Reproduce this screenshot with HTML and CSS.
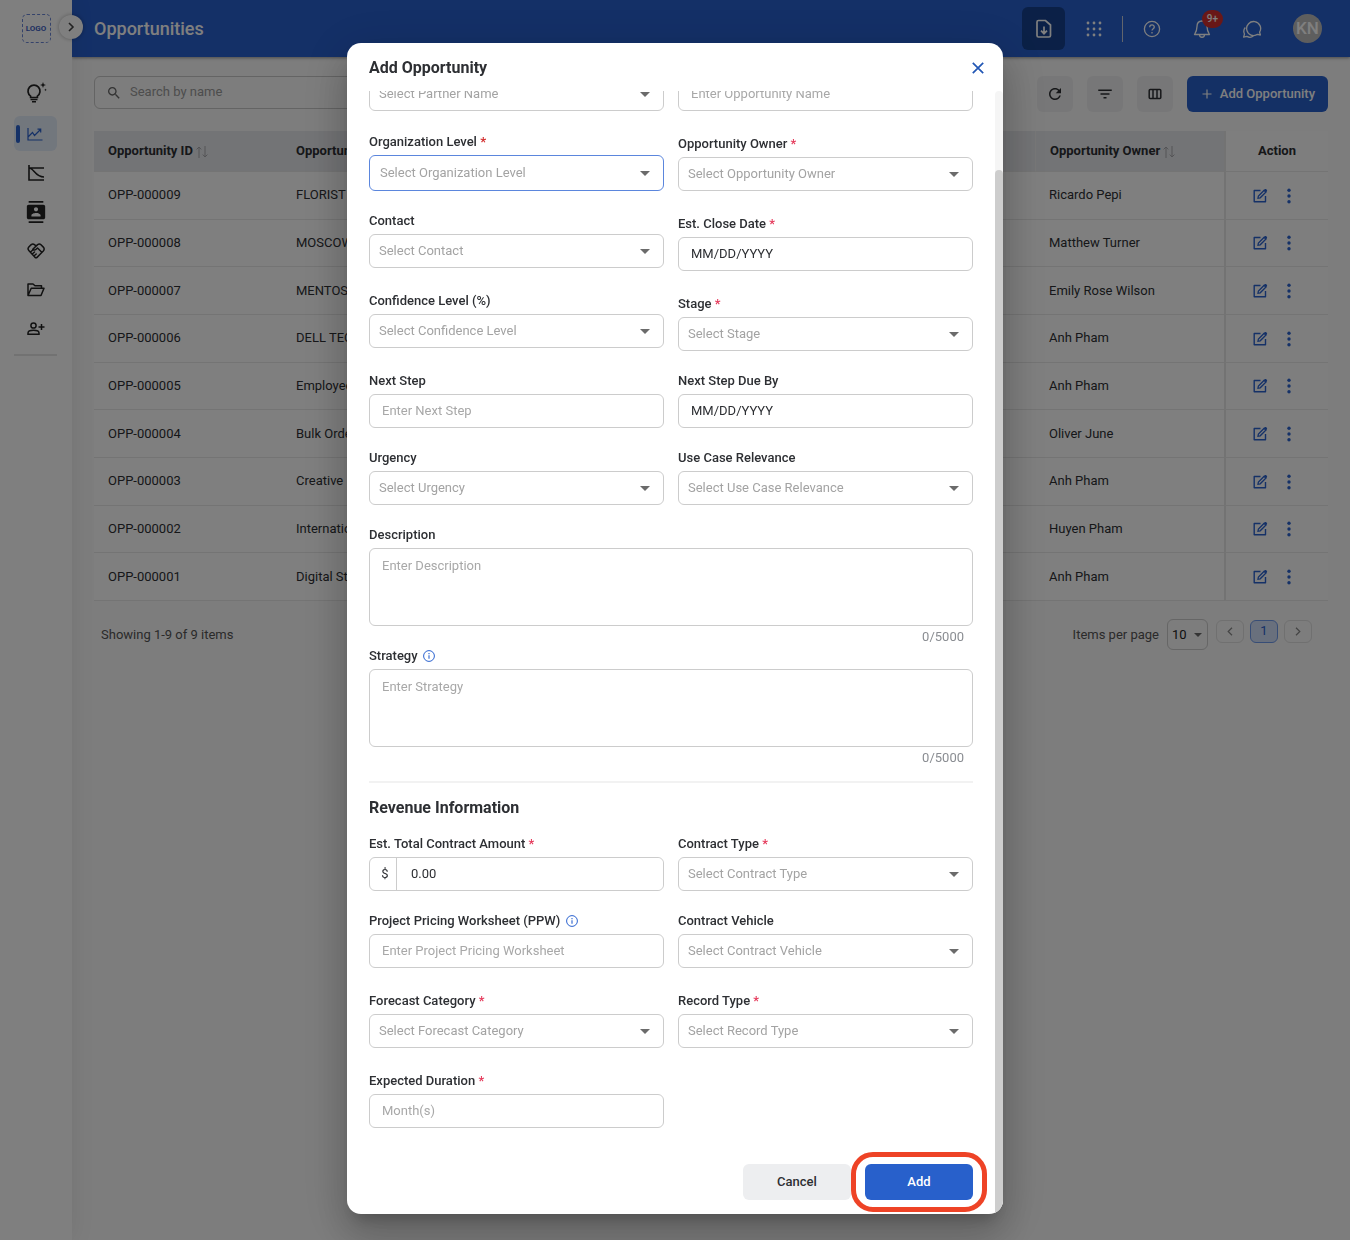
FILE: index.html
```
<!DOCTYPE html>
<html lang="en">
<head>
    <meta charset="UTF-8">
    <meta name="viewport" content="width=device-width, initial-scale=1.0">
    <title>Opportunities</title>
    <link rel="stylesheet" href="styles.css">
</head>
<body>

<svg class="sprite" aria-hidden="true">
    <symbol id="i-edit" viewBox="0 0 16 16"><path d="M8.5 2.5H2.2v11.3h11.3V8" fill="none" stroke="currentColor" stroke-width="1.4" stroke-linejoin="round"/><path d="M6 10.2l.4-2.2 5.8-5.8 1.8 1.8-5.8 5.8z" fill="none" stroke="currentColor" stroke-width="1.3"/><path d="M11.6 2.6l1.3-1.3c.5-.5 1-.4 1.4 0l.6.6c.4.4.4.9 0 1.4l-1.3 1.3z" fill="currentColor"/></symbol>
    <symbol id="i-dots" viewBox="0 0 4 16"><circle cx="2" cy="2.2" r="1.7" fill="currentColor"/><circle cx="2" cy="8" r="1.7" fill="currentColor"/><circle cx="2" cy="13.8" r="1.7" fill="currentColor"/></symbol>
    <symbol id="i-sort" viewBox="0 0 12 12"><path d="M3 12V1M.6 3.4L3 1l2.2 2.4M9 0v11M6.8 8.6L9 11l2.4-2.4" fill="none" stroke="currentColor"/></symbol>
    <symbol id="i-info" viewBox="0 0 12 12"><circle cx="6" cy="6" r="5.4" fill="none" stroke="currentColor"/><path d="M6 5.2v3.6M6 3v1.2" stroke="currentColor" stroke-width="1.1"/></symbol>
</svg>

<div class="app">
    <nav class="sidebar">
        <div class="logo">LOGO</div>
        <button class="sidebar-toggle" aria-label="Expand menu">
            <svg width="8" height="10" viewBox="0 0 8 10"><path d="M2 1l4 4-4 4" fill="none" stroke="currentColor" stroke-width="1.6"/></svg>
        </button>
        <div class="menu">
            <a class="menu-item menu-item-first" href="#" aria-label="Insights">
                <svg width="22" height="22" viewBox="0 0 22 22" fill="none" stroke="currentColor"><path d="M5.600 14.100a6 6 0 1 1 6.800 0v1.400H5.600z" stroke-width="1.7"/><path d="M5.500 17.500h7M7 19.700h4" stroke-width="1.600"/><path d="M18 0l.8 2.200L21 3l-2.200.8L18 6l-.8-2.200L15 3l2.200-.8zM20.500 6.500l.4 1 1 .4-1 .4-.4 1-.4-1-1-.4 1-.4z" fill="currentColor" stroke="none"/></svg>
            </a>
            <a class="menu-item active" href="#" aria-label="Opportunities">
                <svg width="16" height="14" viewBox="0 0 16 14" fill="none" stroke="currentColor"><path d="M1 1v12h14.500M1 10l4.500-4.500 2 3 6-6M10.500 2.200h3.200v3.200" stroke-width="1.200"/></svg>
            </a>
            <a class="menu-item" href="#" aria-label="Forecast">
                <svg width="16" height="16" viewBox="0 0 16 16" fill="none" stroke="currentColor"><path d="M1 0v15h15M1 3h15M1 3c5 0 6 9 15 9" stroke-width="1.600"/></svg>
            </a>
            <a class="menu-item" href="#" aria-label="Contacts">
                <svg width="22" height="22" viewBox="0 0 24 24" fill="currentColor"><path d="M20 0H4v2h16V0zM4 24h16v-2H4v2zM20 4H4c-1.100 0-2 .9-2 2v12c0 1.100.9 2 2 2h16c1.100 0 2-.9 2-2V6c0-1.100-.9-2-2-2zm-8 2.750c1.240 0 2.250 1.010 2.250 2.250s-1.010 2.250-2.250 2.250S9.750 10.240 9.750 9 10.760 6.750 12 6.750zM17 17H7v-1.500c0-1.670 3.330-2.500 5-2.500s5 .83 5 2.500V17z"/></svg>
            </a>
            <a class="menu-item" href="#" aria-label="Partners">
                <svg width="18" height="16" viewBox="0 0 18 16" fill="none" stroke="currentColor" stroke-width="1.500" stroke-linecap="round" stroke-linejoin="round"><path d="M9 3L7.500 1.600C6.500.8 5.200.8 4.200 1.600L1.800 4c-1 1.200-1 2.400 0 3.500l6 6.600c.8.8 1.700.8 2.500 0l6-6.200c1.100-1.200 1.100-2.600 0-3.800L14 1.800c-1-1-2.300-1-3.400-.2L5.800 6.300c.9 1.100 2.100 1 3 .2L10.500 5l4.300 4.200M3.500 9l2-1.800M5.300 11l2.200-2M7.200 12.800l2-1.800"/></svg>
            </a>
            <a class="menu-item" href="#" aria-label="Documents">
                <svg width="18" height="14" viewBox="0 0 18 14" fill="none" stroke="currentColor" stroke-width="1.500" stroke-linejoin="round"><path d="M1 12.500V1h5l2 1.800h6.500v2.400M1 12.500L4.200 5.200H17l-3 7.300z"/></svg>
            </a>
            <a class="menu-item" href="#" aria-label="Add user">
                <svg width="18" height="14" viewBox="0 0 18 14" fill="none" stroke="currentColor" stroke-width="1.500"><circle cx="6.500" cy="3.500" r="2.600"/><path d="M1 12.200v-1.300c0-3.600 11-3.600 11 0v1.300zM14.500 2v6M11.500 5h6"/></svg>
            </a>
        </div>
    </nav>

    <div class="main">
        <header class="topbar">
            <h1>Opportunities</h1>
            <div class="topbar-actions">
                <button class="topbar-btn topbar-btn-dark" aria-label="Download">
                    <svg width="16" height="20" viewBox="0 0 16 20" fill="none" stroke="currentColor" stroke-width="1.700"><path d="M2.500 1.500h7L14.500 6v10.500a1.500 1.500 0 0 1-1.500 1.500H2.500A1.500 1.500 0 0 1 1 16.500V3a1.500 1.500 0 0 1 1.500-1.500zM8 7.500v7M5 11.700l3 3 3-3"/></svg>
                </button>
                <button class="topbar-btn" aria-label="Apps">
                    <svg width="16" height="16" viewBox="0 0 16 16" fill="currentColor"><circle cx="2" cy="2" r="1.400"/><circle cx="8" cy="2" r="1.400"/><circle cx="14" cy="2" r="1.400"/><circle cx="2" cy="8" r="1.400"/><circle cx="8" cy="8" r="1.400"/><circle cx="14" cy="8" r="1.400"/><circle cx="2" cy="14" r="1.400"/><circle cx="8" cy="14" r="1.400"/><circle cx="14" cy="14" r="1.400"/></svg>
                </button>
                <span class="topbar-line"></span>
                <button class="topbar-btn" aria-label="Help">
                    <svg width="18" height="18" viewBox="0 0 18 18" fill="none" stroke="currentColor" stroke-width="1.300"><circle cx="9" cy="9" r="7.600"/><path d="M6.700 7.200c0-3 4.600-3 4.600-.2 0 1.700-2.300 1.800-2.300 3.600M9 12v1.500"/></svg>
                </button>
                <button class="topbar-btn" aria-label="Notifications">
                    <svg width="18" height="20" viewBox="0 0 18 20" fill="none" stroke="currentColor" stroke-width="1.300" stroke-linejoin="round"><path d="M9 2C5.500 2 4 4.500 4 7.500c0 4-1 5.500-2.500 8h15C15 13 14 11.500 14 7.500 14 4.500 12.500 2 9 2zM6.500 16c.3 3 4.700 3 5 0"/></svg>
                    <span class="badge">9+</span>
                </button>
                <button class="topbar-btn" aria-label="Messages">
                    <svg width="20" height="20" viewBox="0 0 20 20" fill="none" stroke="currentColor" stroke-width="1.300" stroke-linejoin="round"><path d="M17.600 13.200l.8 2.800-2.800-.7a7 7 0 1 1 2-2.100zM3.300 8.500a6 6 0 0 0-.8 6.500l-.9 3.200 3.300-.8c2.300 1.300 4.800 1 6.600-.6"/></svg>
                </button>
                <span class="avatar">KN</span>
            </div>
        </header>

        <main class="content">
            <div class="toolbar">
                <label class="search">
                    <svg width="16" height="16" viewBox="0 0 24 24" fill="currentColor"><path d="M15.500 14h-.79l-.28-.27C15.410 12.590 16 11.110 16 9.500 16 5.910 13.090 3 9.500 3S3 5.910 3 9.500 5.910 16 9.500 16c1.610 0 3.090-.59 4.230-1.570l.27.28v.79l5 4.990L20.490 19l-4.990-5zm-6 0C7.010 14 5 11.990 5 9.500S7.010 5 9.500 5 14 7.010 14 9.500 11.990 14 9.500 14z"/></svg>
                    <input type="text" placeholder="Search by name" aria-label="Search by name">
                </label>
                <div class="tools">
                    <button class="tool" aria-label="Refresh"><svg width="18" height="18" viewBox="0 0 24 24" fill="currentColor"><path d="M17.650 6.350C16.200 4.900 14.210 4 12 4c-4.420 0-7.990 3.580-7.990 8s3.570 8 7.990 8c3.730 0 6.840-2.550 7.730-6h-2.080c-.82 2.330-3.040 4-5.650 4-3.310 0-6-2.690-6-6s2.690-6 6-6c1.660 0 3.140.69 4.220 1.780L13 11h7V4l-2.350 2.350z"/></svg></button>
                    <button class="tool" aria-label="Filter"><svg width="18" height="18" viewBox="0 0 24 24" fill="currentColor"><path d="M10 18h4v-2h-4v2zM3 6v2h18V6H3zm3 7h12v-2H6v2z"/></svg></button>
                    <button class="tool" aria-label="Columns"><svg width="14" height="12" viewBox="0 0 14 12" fill="none" stroke="currentColor" stroke-width="1.500"><rect x="1.200" y="1.500" width="11.600" height="9" rx="1"/><path d="M5 1.500v9M9 1.500v9"/></svg></button>
                    <button class="btn btn-primary btn-new">
                        <svg width="10" height="10" viewBox="0 0 10 10"><path d="M5 .5v9M.5 5h9" stroke="currentColor" stroke-width="1.200"/></svg>
                        Add Opportunity
                    </button>
                </div>
            </div>

            <table class="grid">
                <thead>
                    <tr>
                        <th class="col-id">Opportunity ID <svg class="sort"><use href="#i-sort"/></svg></th>
                        <th class="col-name">Opportunity Name <svg class="sort"><use href="#i-sort"/></svg></th>
                        <th class="col-owner">Opportunity Owner <svg class="sort"><use href="#i-sort"/></svg></th>
                        <th class="col-action">Action</th>
                    </tr>
                </thead>
                <tbody>
                    <tr><td>OPP-000009</td><td>FLORIST</td><td>Ricardo Pepi</td><td class="col-action"><button aria-label="Edit"><svg class="edit"><use href="#i-edit"/></svg></button><button aria-label="More"><svg class="dots"><use href="#i-dots"/></svg></button></td></tr>
                    <tr><td>OPP-000008</td><td>MOSCOW</td><td>Matthew Turner</td><td class="col-action"><button aria-label="Edit"><svg class="edit"><use href="#i-edit"/></svg></button><button aria-label="More"><svg class="dots"><use href="#i-dots"/></svg></button></td></tr>
                    <tr><td>OPP-000007</td><td>MENTOS</td><td>Emily Rose Wilson</td><td class="col-action"><button aria-label="Edit"><svg class="edit"><use href="#i-edit"/></svg></button><button aria-label="More"><svg class="dots"><use href="#i-dots"/></svg></button></td></tr>
                    <tr><td>OPP-000006</td><td>DELL TECH</td><td>Anh Pham</td><td class="col-action"><button aria-label="Edit"><svg class="edit"><use href="#i-edit"/></svg></button><button aria-label="More"><svg class="dots"><use href="#i-dots"/></svg></button></td></tr>
                    <tr><td>OPP-000005</td><td>Employee</td><td>Anh Pham</td><td class="col-action"><button aria-label="Edit"><svg class="edit"><use href="#i-edit"/></svg></button><button aria-label="More"><svg class="dots"><use href="#i-dots"/></svg></button></td></tr>
                    <tr><td>OPP-000004</td><td>Bulk Order</td><td>Oliver June</td><td class="col-action"><button aria-label="Edit"><svg class="edit"><use href="#i-edit"/></svg></button><button aria-label="More"><svg class="dots"><use href="#i-dots"/></svg></button></td></tr>
                    <tr><td>OPP-000003</td><td>Creative I</td><td>Anh Pham</td><td class="col-action"><button aria-label="Edit"><svg class="edit"><use href="#i-edit"/></svg></button><button aria-label="More"><svg class="dots"><use href="#i-dots"/></svg></button></td></tr>
                    <tr><td>OPP-000002</td><td>International</td><td>Huyen Pham</td><td class="col-action"><button aria-label="Edit"><svg class="edit"><use href="#i-edit"/></svg></button><button aria-label="More"><svg class="dots"><use href="#i-dots"/></svg></button></td></tr>
                    <tr><td>OPP-000001</td><td>Digital Strategy</td><td>Anh Pham</td><td class="col-action"><button aria-label="Edit"><svg class="edit"><use href="#i-edit"/></svg></button><button aria-label="More"><svg class="dots"><use href="#i-dots"/></svg></button></td></tr>
                </tbody>
            </table>

            <div class="pager">
                <span class="pager-count">Showing 1-9 of 9 items</span>
                <div class="pager-nav">
                    <label for="per-page">Items per page</label>
                    <div class="select select-small">
                        <select id="per-page"><option>10</option></select>
                    </div>
                    <div class="pages">
                        <button aria-label="Previous page"><svg width="6" height="9" viewBox="0 0 6 9"><path d="M5 .8L1.200 4.500 5 8.200" fill="none" stroke="currentColor" stroke-width="1.200"/></svg></button>
                        <button class="current">1</button>
                        <button aria-label="Next page"><svg width="6" height="9" viewBox="0 0 6 9"><path d="M1 .8l3.800 3.700L1 8.200" fill="none" stroke="currentColor" stroke-width="1.200"/></svg></button>
                    </div>
                </div>
            </div>
        </main>
    </div>
</div>

<div class="overlay">
    <div class="modal" role="dialog" aria-labelledby="modal-title">
        <div class="modal-header">
            <h2 id="modal-title">Add Opportunity</h2>
            <button class="close" aria-label="Close">
                <svg width="12" height="12" viewBox="0 0 12 12"><path d="M.8.8l10.400 10.400M11.200.8L.8 11.200" stroke="currentColor" stroke-width="1.700"/></svg>
            </button>
        </div>
        <div class="modal-scroll">
            <form class="modal-body" id="modal-body">
                <div class="fields">
                    <div class="field">
                        <div class="select"><select aria-label="Partner Name"><option>Select Partner Name</option></select></div>
                    </div>
                    <div class="field">
                        <input type="text" aria-label="Opportunity Name" placeholder="Enter Opportunity Name">
                    </div>
                    <div class="field field-focus">
                        <label for="org">Organization Level <span>*</span></label>
                        <div class="select"><select id="org"><option>Select Organization Level</option></select></div>
                    </div>
                    <div class="field">
                        <label class="required" for="owner">Opportunity Owner <span>*</span></label>
                        <div class="select"><select id="owner"><option>Select Opportunity Owner</option></select></div>
                    </div>
                    <div class="field">
                        <label for="contact">Contact</label>
                        <div class="select"><select id="contact"><option>Select Contact</option></select></div>
                    </div>
                    <div class="field">
                        <label class="required" for="close-date">Est. Close Date <span>*</span></label>
                        <input type="text" id="close-date" value="MM/DD/YYYY">
                    </div>
                    <div class="field">
                        <label for="confidence">Confidence Level (%)</label>
                        <div class="select"><select id="confidence"><option>Select Confidence Level</option></select></div>
                    </div>
                    <div class="field">
                        <label class="required" for="stage">Stage <span>*</span></label>
                        <div class="select"><select id="stage"><option>Select Stage</option></select></div>
                    </div>
                    <div class="field">
                        <label for="next-step">Next Step</label>
                        <input type="text" id="next-step" placeholder="Enter Next Step">
                    </div>
                    <div class="field">
                        <label for="next-date">Next Step Due By</label>
                        <input type="text" id="next-date" value="MM/DD/YYYY">
                    </div>
                    <div class="field">
                        <label for="urgency">Urgency</label>
                        <div class="select"><select id="urgency"><option>Select Urgency</option></select></div>
                    </div>
                    <div class="field">
                        <label for="use-case">Use Case Relevance</label>
                        <div class="select"><select id="use-case"><option>Select Use Case Relevance</option></select></div>
                    </div>
                </div>

                <div class="field field-text">
                    <label for="description">Description</label>
                    <textarea id="description" placeholder="Enter Description"></textarea>
                    <span class="counter">0/5000</span>
                </div>
                <div class="field">
                    <label for="strategy">Strategy <svg class="info"><use href="#i-info"/></svg></label>
                    <textarea id="strategy" placeholder="Enter Strategy"></textarea>
                    <span class="counter">0/5000</span>
                </div>

                <h3>Revenue Information</h3>

                <div class="fields">
                    <div class="field">
                        <label class="required" for="amount">Est. Total Contract Amount <span>*</span></label>
                        <div class="money">
                            <span>$</span>
                            <input type="text" id="amount" value="0.00">
                        </div>
                    </div>
                    <div class="field">
                        <label class="required" for="contract-type">Contract Type <span>*</span></label>
                        <div class="select"><select id="contract-type"><option>Select Contract Type</option></select></div>
                    </div>
                    <div class="field">
                        <label for="ppw">Project Pricing Worksheet (PPW) <svg class="info"><use href="#i-info"/></svg></label>
                        <input type="text" id="ppw" placeholder="Enter Project Pricing Worksheet">
                    </div>
                    <div class="field">
                        <label for="vehicle">Contract Vehicle</label>
                        <div class="select"><select id="vehicle"><option>Select Contract Vehicle</option></select></div>
                    </div>
                    <div class="field">
                        <label class="required" for="forecast">Forecast Category <span>*</span></label>
                        <div class="select"><select id="forecast"><option>Select Forecast Category</option></select></div>
                    </div>
                    <div class="field">
                        <label class="required" for="record">Record Type <span>*</span></label>
                        <div class="select"><select id="record"><option>Select Record Type</option></select></div>
                    </div>
                    <div class="field">
                        <label class="required" for="duration">Expected Duration <span>*</span></label>
                        <input type="text" id="duration" placeholder="Month(s)">
                    </div>
                </div>

                <div class="modal-footer">
                    <button type="button" class="btn btn-secondary">Cancel</button>
                    <button type="button" class="btn btn-primary btn-marked">Add</button>
                </div>
            </form>
            <div class="scroll-track"><div class="scroll-thumb"></div></div>
        </div>
    </div>
</div>

<script>
    // open the form at its last section
    var body = document.getElementById("modal-body");
    body.scrollTop = body.scrollHeight;
</script>

</body>
</html>
```
FILE: styles.css
```
* {
    box-sizing: border-box;
}
body {
    margin: 0;
    font-family: Roboto, Arial, sans-serif;
    font-size: 13px;
    line-height: 16px;
    color: #2d2f33;
    background: #fafafa;
}
button, input, select, textarea {
    font: inherit;
    color: inherit;
}
button {
    display: flex;
    align-items: center;
    justify-content: center;
    padding: 0;
    border: 0;
    background: none;
    cursor: pointer;
}
h1, h2, h3 {
    margin: 0;
}
.sprite {
    display: none;
}
.app {
    display: flex;
    min-height: 100vh;
}

/* sidebar */
.sidebar {
    position: relative;
    flex: none;
    width: 72px;
    padding-top: 14px;
    background: #fff;
    box-shadow: 0 0 24px rgba(0, 0, 0, 0.08);
    z-index: 1;
}
.logo {
    width: 29px;
    height: 29px;
    margin: 0 auto;
    border: 1px dashed #6b86d6;
    border-radius: 5px;
    font-size: 8px;
    font-weight: 700;
    line-height: 28px;
    text-align: center;
    color: #3f62c4;
}
.sidebar-toggle {
    position: absolute;
    top: 15px;
    right: -11px;
    width: 24px;
    height: 24px;
    border-radius: 50%;
    background: #fff;
    color: #444;
    box-shadow: 0 0 4px rgba(0, 0, 0, 0.3);
}
.menu {
    display: flex;
    flex-direction: column;
    gap: 4px;
    margin: 30px 15px 0 14px;
    padding-bottom: 8px;
    border-bottom: 2px solid #e4e4e4;
}
.menu-item {
    display: flex;
    align-items: center;
    justify-content: center;
    height: 35px;
    border-radius: 6px;
    color: #222;
}
.menu-item-first {
    height: 39px;
}
.menu-item.active {
    background: #e4eefb;
    color: #2a62cf;
}
.menu-item.active::before {
    content: "";
    width: 4px;
    height: 18px;
    margin: 0 7px 0 -12px;
    border-radius: 2px;
    background: #2a62cf;
}

/* top bar */
.main {
    flex: 1;
    min-width: 0;
}
.topbar {
    display: flex;
    align-items: center;
    justify-content: space-between;
    height: 57px;
    padding: 0 28px 0 22px;
    background: #2860cf;
    color: #fff;
    box-shadow: 0 1px 3px rgba(0, 0, 0, 0.4);
}
.topbar h1 {
    font-size: 18px;
    font-weight: 500;
    line-height: 24px;
}
.topbar-actions {
    display: flex;
    align-items: center;
    gap: 7px;
}
.topbar-btn {
    position: relative;
    width: 43px;
    height: 43px;
    border-radius: 6px;
}
.topbar-btn-dark {
    background: #16418f;
}
.topbar-line {
    width: 1px;
    height: 26px;
    background: #c5cbd8;
}
.badge {
    position: absolute;
    top: 3px;
    right: 0;
    padding: 0 5px;
    border-radius: 9px;
    background: #d32f2f;
    font-size: 10px;
    font-weight: 500;
    line-height: 18px;
}
.avatar {
    width: 29px;
    height: 29px;
    margin-left: 13px;
    border-radius: 50%;
    background: #bdbdbd;
    font-size: 17px;
    font-weight: 500;
    line-height: 29px;
    text-align: center;
}

/* list page */
.content {
    padding: 19px 22px;
}
.toolbar {
    display: flex;
    justify-content: space-between;
    height: 36px;
}
.search {
    display: flex;
    align-items: center;
    gap: 8px;
    width: 420px;
    height: 33px;
    padding: 0 11px;
    border: 1px solid #c8c8c8;
    border-radius: 6px;
    color: #666;
}
.search input {
    flex: 1;
    padding: 0 0 1px;
    border: 0;
    background: none;
    outline: 0;
}
.search input::placeholder {
    color: #9a9a9a;
}
.tools {
    display: flex;
    gap: 14px;
}
.tool {
    width: 36px;
    border-radius: 6px;
    background: #efeff0;
    color: #2d2f33;
}
.btn {
    height: 36px;
    border-radius: 6px;
    font-weight: 500;
}
.btn-primary {
    background: #2860cb;
    color: #fff;
}
.btn-secondary {
    background: #edeef0;
}
.btn-new {
    gap: 8px;
    padding: 0 13px 0 15px;
}
.grid {
    width: 100%;
    height: 470px;
    margin-top: 19px;
    border-collapse: separate;
    border-spacing: 0;
    table-layout: fixed;
    background: #fff;
}
.grid th, .grid td {
    padding: 0 14px;
    border-bottom: 1px solid #e8e8e8;
    text-align: left;
    white-space: nowrap;
    overflow: hidden;
}
.grid th {
    height: 41px;
    background: #e7e8ec;
    font-weight: 700;
}
.grid .col-id {
    width: 188px;
}
.grid .col-owner {
    width: 189px;
    border-left: 1px solid #f0f0f0;
}
.grid .col-action {
    width: 104px;
    padding: 0;
    border-left: 2px solid #e6e6e6;
    background: #fdfdfd;
    text-align: center;
}
.grid td.col-action {
    padding-right: 12px;
}
.grid .col-action button {
    display: inline-flex;
    vertical-align: middle;
    color: #2a62cf;
}
.grid .col-action button + button {
    margin-left: 19px;
}
.sort {
    width: 12px;
    height: 12px;
    vertical-align: -3px;
    color: #a8a8ac;
}
.edit {
    width: 16px;
    height: 16px;
}
.dots {
    width: 4px;
    height: 16px;
}
.pager {
    display: flex;
    align-items: center;
    justify-content: space-between;
    padding: 18px 16px 0 7px;
    color: #555;
}
.pager-nav {
    display: flex;
    align-items: center;
    gap: 8px;
}
.pages {
    display: flex;
    gap: 6px;
    padding-bottom: 7px;
}
.pages button {
    width: 28px;
    height: 23px;
    border: 1px solid #e0e0e0;
    border-radius: 6px;
    color: #888;
}
.pages .current {
    border-color: #6f9aec;
    background: #d3e1fa;
    color: #2a62cf;
}

/* form controls */
.select {
    display: grid;
    align-items: center;
}
.select select, .select::after {
    grid-area: 1 / 1;
}
.select select {
    appearance: none;
    width: 100%;
    height: 34px;
    padding: 0 30px 0 9px;
    border: 1px solid #ccc;
    border-radius: 6px;
    background: #fff;
    color: #a3a3a3;
}
.select::after {
    content: "";
    justify-self: end;
    margin-right: 14px;
    border: 5px solid transparent;
    border-top-color: #6b6b6b;
    border-bottom: 0;
    pointer-events: none;
}
.select-small select {
    width: 41px;
    height: 31px;
    padding: 0 0 0 4px;
    background: none;
    color: #222;
}
.select-small::after {
    margin-right: 6px;
    border-width: 4px 4px 0;
}
.field input, .field textarea {
    display: block;
    width: 100%;
    height: 34px;
    padding: 0 12px 1px;
    border: 1px solid #ccc;
    border-radius: 6px;
    background: #fff;
}
.field textarea {
    height: 78px;
    padding: 9px 12px;
    resize: none;
}
.field input::placeholder, .field textarea::placeholder {
    color: #a8a8a8;
}
.field label {
    display: block;
    margin-bottom: 5px;
    font-weight: 500;
}
.field label.required {
    padding-top: 3px;
}
.field label span {
    color: #e5395a;
}
.field-focus {
    align-self: end;
}
.field-focus label span {
    color: #d32f2f;
    font-weight: 700;
}
.field-focus .select select {
    height: 36px;
    padding-left: 10px;
    border-color: #5b86dd;
}
.info {
    width: 12px;
    height: 12px;
    margin-left: 2px;
    vertical-align: -2px;
    color: #2a62cf;
}
.counter {
    display: block;
    padding-right: 9px;
    line-height: 22px;
    text-align: right;
    color: #8a8d92;
}
.money {
    display: flex;
    height: 34px;
    border: 1px solid #ccc;
    border-radius: 6px;
}
.money span {
    width: 27px;
    padding-left: 4px;
    border-right: 1px solid #ccc;
    line-height: 32px;
    text-align: center;
}
.money input {
    flex: 1;
    height: 32px;
    padding: 0 14px 1px;
    border: 0;
}

/* modal */
.overlay {
    position: fixed;
    inset: 0;
    display: flex;
    justify-content: center;
    padding: 43px 16px 26px;
    background: rgba(0, 0, 0, 0.5);
    z-index: 10;
}
.modal {
    display: flex;
    flex-direction: column;
    width: 100%;
    max-width: 656px;
    border-radius: 14px;
    background: #fff;
    overflow: hidden;
    box-shadow: 0 11px 15px -7px rgba(0, 0, 0, 0.2), 0 24px 38px 3px rgba(0, 0, 0, 0.14), 0 9px 46px 8px rgba(0, 0, 0, 0.12);
}
.modal-header {
    display: flex;
    flex: none;
    align-items: center;
    justify-content: space-between;
    height: 48px;
    padding: 2px 19px 0 22px;
}
.modal-header h2, .modal-body h3 {
    font-size: 16px;
    font-weight: 700;
    line-height: 24px;
}
.close {
    color: #2257b5;
}
.modal-scroll {
    display: flex;
    flex: 1;
    min-height: 0;
}
.modal-body {
    flex: 1;
    min-width: 0;
    padding: 76px 22px 14px;
    overflow-y: auto;
    scrollbar-width: none;
}
.scroll-track {
    display: flex;
    flex: none;
    align-items: flex-end;
    width: 8px;
    border-radius: 4px 4px 0 0;
    background: #f5f5f5;
}
.scroll-thumb {
    width: 100%;
    height: 93%;
    border-radius: 4px 4px 0 0;
    background: #cdcdcd;
}
.fields {
    display: grid;
    grid-template-columns: 1fr 1fr;
    gap: 22px 14px;
}
.field-text {
    margin-top: 22px;
}
.modal-body h3 {
    margin: 12px 0 13px;
    padding-top: 13px;
    border-top: 2px solid #f2f2f2;
}
.modal-footer {
    display: flex;
    justify-content: flex-end;
    gap: 14px;
    padding-top: 36px;
}
.modal-footer .btn {
    width: 108px;
}
/* highlight ring around the submit button */
.btn-marked {
    position: relative;
}
.btn-marked::after {
    content: "";
    position: absolute;
    inset: -12px -14px;
    border: 5px solid #ee4326;
    border-radius: 22px;
}
```
